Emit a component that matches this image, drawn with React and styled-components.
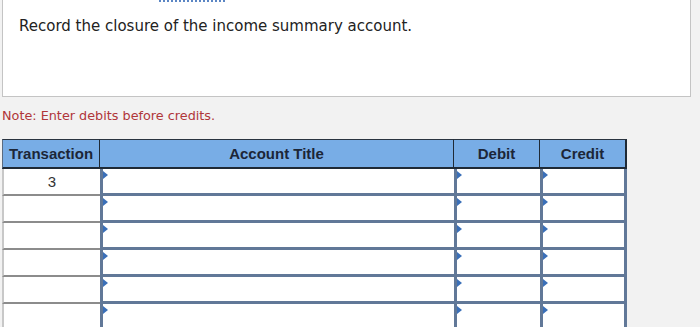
import React from 'react'
import styled, { createGlobalStyle } from 'styled-components'

const GlobalStyle = createGlobalStyle`
  html, body {
    margin: 0;
    padding: 0;
    background: #f2f2f2;
    overflow: hidden;
  }
`;

const Page = styled.div`
  width: 700px;
  height: 327px;
  padding-left: 2px;
  box-sizing: border-box;
`;

const QuestionBox = styled.div`
  width: 689px;
  height: 97px;
  box-sizing: border-box;
  background: #fff;
  border: 1px solid #c4c4c4;
  border-top: none;
  padding-left: 16px;
`;

const LinkTrail = styled.div`
  margin-left: 140px;
  width: 66px;
  height: 0;
  border-top: 2px dotted #5b86c4;
`;

const Prompt = styled.div`
  margin-top: 15px;
  font-family: "DejaVu Sans", Verdana, sans-serif;
  font-size: 15px;
  line-height: 18px;
  color: #222;
`;

const Note = styled.div`
  margin-top: 11px;
  font-family: "DejaVu Sans", Verdana, sans-serif;
  font-size: 12.8px;
  line-height: 16px;
  color: #b0363a;
`;

const Journal = styled.table`
  margin-top: 15px;
  border-collapse: separate;
  border-spacing: 0;
  table-layout: fixed;
  width: 625px;
`;

const HeadCell = styled.th`
  width: ${(props) => props.width}px;
  height: 27px;
  padding: 0;
  background: #78ade6;
  border-top: 1px solid #2a3440;
  border-bottom: 2px solid #1f2a36;
  border-right: ${(props) => (props.last ? '2px' : '1px')} solid #1f2a36;
  border-left: ${(props) => (props.first ? '1px solid #5a6b80' : 'none')};
  font-family: "Liberation Sans", Arial, sans-serif;
  font-size: 15px;
  line-height: 17px;
  font-weight: 700;
  color: #1c2638;
  text-align: center;
  vertical-align: middle;
`;

const NumberCell = styled.td`
  height: 25px;
  padding: 0;
  background: #fff;
  border-left: 2px solid #c8c8c8;
  border-bottom: 2px solid #8c8c8c;
  font-family: "Liberation Sans", Arial, sans-serif;
  font-size: 15px;
  line-height: 17px;
  color: #333;
  text-align: center;
  vertical-align: middle;
`;

const EntryCell = styled.td`
  position: relative;
  height: 24px;
  padding: 0;
  background: #fff;
  border-left: 3px solid #617898;
  border-bottom: 3px solid #617898;
  border-right: ${(props) => (props.last ? '3px solid #617898' : 'none')};

  &::before {
    content: '';
    position: absolute;
    top: 2px;
    left: 0;
    border-top: 4px solid transparent;
    border-bottom: 4px solid transparent;
    border-left: 5px solid #3a6fb8;
  }
`;

const rows = ['3', '', '', '', '', ''];

export default function App() {
  return (
    <Page>
      <GlobalStyle />
      <QuestionBox>
        <LinkTrail />
        <Prompt>Record the closure of the income summary account.</Prompt>
      </QuestionBox>
      <Note>Note: Enter debits before credits.</Note>
      <Journal>
        <thead>
          <tr>
            <HeadCell width={96} first>Transaction</HeadCell>
            <HeadCell width={353}>Account Title</HeadCell>
            <HeadCell width={85}>Debit</HeadCell>
            <HeadCell width={85} last>Credit</HeadCell>
          </tr>
        </thead>
        <tbody>
          {rows.map((num, i) => (
            <tr key={i}>
              <NumberCell>{num}</NumberCell>
              <EntryCell />
              <EntryCell />
              <EntryCell last />
            </tr>
          ))}
        </tbody>
      </Journal>
    </Page>
  );
}
